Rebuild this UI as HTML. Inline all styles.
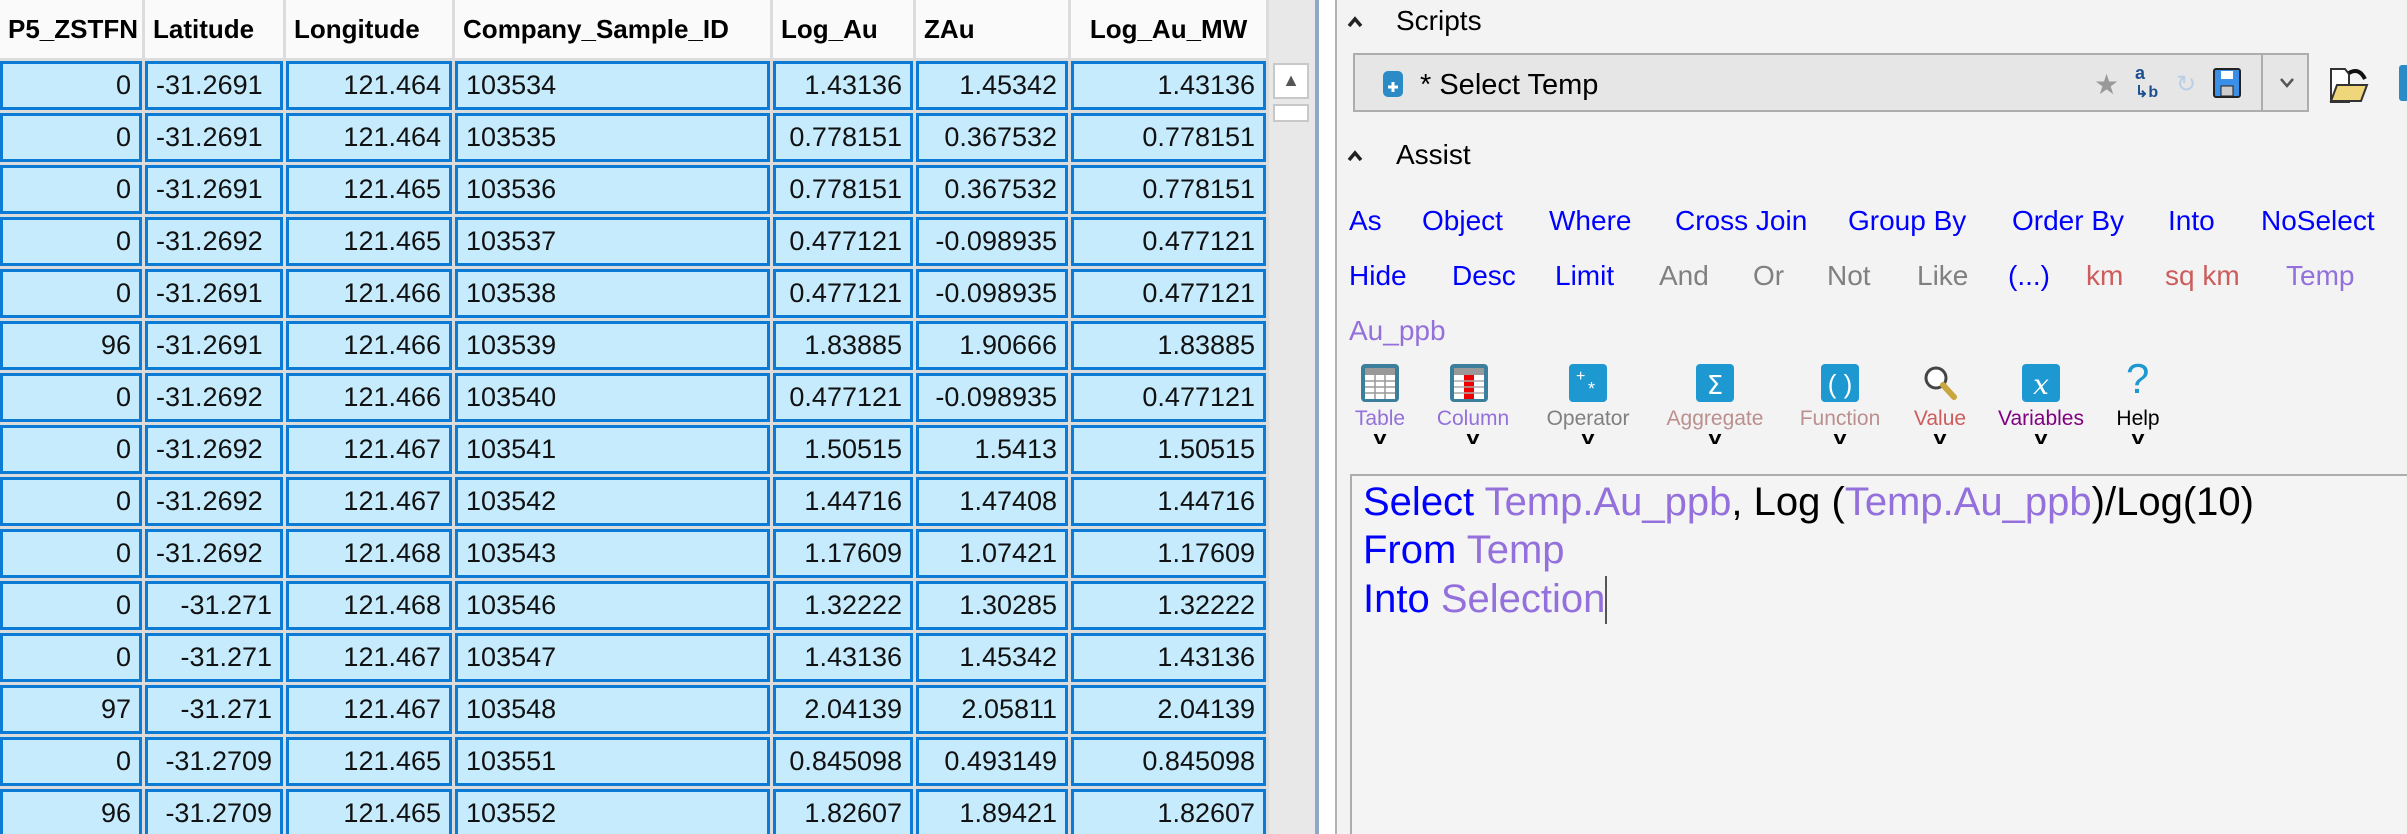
<!DOCTYPE html>
<html><head><meta charset="utf-8"><style>
*{margin:0;padding:0;box-sizing:border-box}
html,body{width:2407px;height:834px;overflow:hidden}
body{background:#f3f3f3;font-family:"Liberation Sans",sans-serif;position:relative}
#left{position:absolute;left:0;top:0;width:1315px;height:834px;background:#e8e8e8;overflow:hidden}
table{position:absolute;left:-3px;top:-3px;border-collapse:separate;border-spacing:3px;table-layout:fixed;background:#dcdcdc}
th{height:58px;background:#fafafa;font-weight:bold;font-size:26px;text-align:left;padding:0 8px;white-space:nowrap;overflow:hidden;color:#000}
td{height:49px;background:#c5ebfd;border:3px solid #0c7bd6;font-size:27px;text-align:right;padding:0 8px;white-space:nowrap;color:#111}
td.l{text-align:left}
.sb{position:absolute;left:1269px;top:58px;width:46px;height:776px;background:#e8e8e8}
.abs{position:absolute}
.kw{position:absolute;font-size:28px;white-space:nowrap}
.lbl{position:absolute;font-size:21px;white-space:nowrap;transform:translateX(-50%)}
.chev{position:absolute;font-size:18px;transform:translateX(-50%) scaleX(1.3);font-weight:bold}
.ed{position:absolute;font-size:40px;white-space:nowrap;left:1363px}
.b{color:#0000ff}.p{color:#9370db}.g{color:#808080}.r{color:#cd5c5c}
</style></head><body>
<div id="left">
<table>
<colgroup><col style="width:142px"><col style="width:138px"><col style="width:166px"><col style="width:315px"><col style="width:140px"><col style="width:152px"><col style="width:195px"></colgroup>
<tr><th style="text-align:right;padding-right:4px">P5_ZSTFN</th><th>Latitude</th><th>Longitude</th><th>Company_Sample_ID</th><th>Log_Au</th><th>ZAu</th><th style="text-align:center">Log_Au_MW</th></tr>
<tr><td>0</td><td class="l">-31.2691</td><td>121.464</td><td class="l">103534</td><td>1.43136</td><td>1.45342</td><td>1.43136</td></tr>
<tr><td>0</td><td class="l">-31.2691</td><td>121.464</td><td class="l">103535</td><td>0.778151</td><td>0.367532</td><td>0.778151</td></tr>
<tr><td>0</td><td class="l">-31.2691</td><td>121.465</td><td class="l">103536</td><td>0.778151</td><td>0.367532</td><td>0.778151</td></tr>
<tr><td>0</td><td class="l">-31.2692</td><td>121.465</td><td class="l">103537</td><td>0.477121</td><td>-0.098935</td><td>0.477121</td></tr>
<tr><td>0</td><td class="l">-31.2691</td><td>121.466</td><td class="l">103538</td><td>0.477121</td><td>-0.098935</td><td>0.477121</td></tr>
<tr><td>96</td><td class="l">-31.2691</td><td>121.466</td><td class="l">103539</td><td>1.83885</td><td>1.90666</td><td>1.83885</td></tr>
<tr><td>0</td><td class="l">-31.2692</td><td>121.466</td><td class="l">103540</td><td>0.477121</td><td>-0.098935</td><td>0.477121</td></tr>
<tr><td>0</td><td class="l">-31.2692</td><td>121.467</td><td class="l">103541</td><td>1.50515</td><td>1.5413</td><td>1.50515</td></tr>
<tr><td>0</td><td class="l">-31.2692</td><td>121.467</td><td class="l">103542</td><td>1.44716</td><td>1.47408</td><td>1.44716</td></tr>
<tr><td>0</td><td class="l">-31.2692</td><td>121.468</td><td class="l">103543</td><td>1.17609</td><td>1.07421</td><td>1.17609</td></tr>
<tr><td>0</td><td>-31.271</td><td>121.468</td><td class="l">103546</td><td>1.32222</td><td>1.30285</td><td>1.32222</td></tr>
<tr><td>0</td><td>-31.271</td><td>121.467</td><td class="l">103547</td><td>1.43136</td><td>1.45342</td><td>1.43136</td></tr>
<tr><td>97</td><td>-31.271</td><td>121.467</td><td class="l">103548</td><td>2.04139</td><td>2.05811</td><td>2.04139</td></tr>
<tr><td>0</td><td>-31.2709</td><td>121.465</td><td class="l">103551</td><td>0.845098</td><td>0.493149</td><td>0.845098</td></tr>
<tr><td>96</td><td>-31.2709</td><td>121.465</td><td class="l">103552</td><td>1.82607</td><td>1.89421</td><td>1.82607</td></tr>
</table>
<div class="sb">
<div class="abs" style="left:4px;top:5px;width:36px;height:36px;background:#fff;border:2px solid #c8c8c8;font-size:18px;color:#555;text-align:center;line-height:30px">▲</div>
<div class="abs" style="left:4px;top:46px;width:36px;height:18px;background:#fff;border:2px solid #c8c8c8"></div>
</div>
</div>
<div class="abs" style="left:1315px;top:0;width:4px;height:834px;background:#8fa8c8"></div>
<div class="abs" style="left:1319px;top:0;width:16px;height:834px;background:#fff"></div>
<div class="abs" style="left:1335px;top:0;width:2px;height:834px;background:#b4b4b4"></div>

<svg class="abs" style="left:1347px;top:16px" width="16" height="12"><path d="M2 10L8 3l6 7" stroke="#222" stroke-width="3.5" fill="none"/></svg>
<div class="abs" style="left:1396px;top:5px;font-size:28px">Scripts</div>
<div class="abs" style="left:1353px;top:53px;width:956px;height:59px;border:2px solid #adadad;background:#e6e6e6"></div>
<div class="abs" style="left:2261px;top:55px;width:2px;height:55px;background:#adadad"></div>
<svg class="abs" style="left:2279px;top:77px" width="16" height="12"><path d="M2 2l6 7 6-7" stroke="#555" stroke-width="2.5" fill="none"/></svg>
<svg class="abs" style="left:1382px;top:70px" width="22" height="28"><rect x="1" y="1" width="20" height="26" rx="5" fill="#2a8bc7"/><path d="M11 12v10M6 17h10" stroke="#fff" stroke-width="3"/></svg>
<div class="abs" style="left:1420px;top:69px;font-size:29px">* Select Temp</div>
<div class="abs" style="left:2094px;top:68px;font-size:28px;color:#999">★</div>
<div class="abs" style="left:2135px;top:64px;font-size:18px;color:#1c4f8f;font-weight:bold;line-height:18px">a<br><span style="font-size:16px">↳b</span></div>
<div class="abs" style="left:2176px;top:70px;font-size:24px;color:#b8cfe6">↻</div>
<svg class="abs" style="left:2213px;top:68px" width="28" height="30"><rect x="1" y="1" width="26" height="28" rx="2" fill="#3a8fe8" stroke="#222" stroke-width="2"/><rect x="8" y="3" width="12" height="8" fill="#fff"/><rect x="8" y="18" width="12" height="10" fill="#ccc" stroke="#222"/></svg>
<svg class="abs" style="left:2329px;top:65px" width="40" height="38"><path d="M2 4h14l4 5h0v28H2z" fill="#fff" stroke="#333" stroke-width="2"/><path d="M2 36l6-16h30l-6 16z" fill="#f0d67a" stroke="#333" stroke-width="2"/><path d="M20 8q10-6 16 6" stroke="#111" stroke-width="4" fill="none"/></svg>
<div class="abs" style="left:2399px;top:65px;width:10px;height:36px;background:#2a8bc7;border-radius:3px"></div>

<svg class="abs" style="left:1347px;top:150px" width="16" height="12"><path d="M2 10L8 3l6 7" stroke="#222" stroke-width="3.5" fill="none"/></svg>
<div class="abs" style="left:1396px;top:139px;font-size:28px">Assist</div>

<div class="kw b" style="left:1349px;top:205px">As</div>
<div class="kw b" style="left:1422px;top:205px">Object</div>
<div class="kw b" style="left:1549px;top:205px">Where</div>
<div class="kw b" style="left:1675px;top:205px">Cross Join</div>
<div class="kw b" style="left:1848px;top:205px">Group By</div>
<div class="kw b" style="left:2012px;top:205px">Order By</div>
<div class="kw b" style="left:2168px;top:205px">Into</div>
<div class="kw b" style="left:2261px;top:205px">NoSelect</div>
<div class="kw b" style="left:1349px;top:260px">Hide</div>
<div class="kw b" style="left:1452px;top:260px">Desc</div>
<div class="kw b" style="left:1555px;top:260px">Limit</div>
<div class="kw g" style="left:1659px;top:260px">And</div>
<div class="kw g" style="left:1753px;top:260px">Or</div>
<div class="kw g" style="left:1827px;top:260px">Not</div>
<div class="kw g" style="left:1917px;top:260px">Like</div>
<div class="kw b" style="left:2008px;top:260px">(...)</div>
<div class="kw r" style="left:2086px;top:260px">km</div>
<div class="kw r" style="left:2165px;top:260px">sq km</div>
<div class="kw p" style="left:2286px;top:260px">Temp</div>
<div class="kw p" style="left:1349px;top:315px">Au_ppb</div>

<svg class="abs" style="left:1360px;top:363px" width="40" height="40"><rect x="1" y="1" width="38" height="38" rx="4" fill="#3b7f9c"/><rect x="5" y="5" width="30" height="7" fill="#999"/><path d="M5 12h30v24H5z" fill="#fff"/><path d="M5 18h30M5 24h30M5 30h30M15 12v24M25 12v24" stroke="#999" stroke-width="1.5"/></svg>
<svg class="abs" style="left:1449px;top:363px" width="40" height="40"><rect x="1" y="1" width="38" height="38" rx="4" fill="#3b7f9c"/><rect x="5" y="5" width="30" height="7" fill="#999"/><path d="M5 12h30v24H5z" fill="#fff"/><rect x="15" y="12" width="10" height="24" fill="#e00"/><path d="M5 18h30M5 24h30M5 30h30" stroke="#aaa" stroke-width="1.5"/></svg>
<svg class="abs" style="left:1568px;top:363px" width="40" height="40"><rect x="1" y="1" width="38" height="38" rx="4" fill="#1e98d0"/><text x="8" y="18" fill="#fff" font-size="16" font-family="Liberation Sans">+</text><text x="20" y="32" fill="#fff" font-size="18" font-family="Liberation Sans">*</text></svg>
<svg class="abs" style="left:1695px;top:363px" width="40" height="40"><rect x="1" y="1" width="38" height="38" rx="4" fill="#1e98d0"/><text x="20" y="31" fill="#fff" font-size="26" text-anchor="middle" font-family="DejaVu Sans">Σ</text></svg>
<svg class="abs" style="left:1820px;top:363px" width="40" height="40"><rect x="1" y="1" width="38" height="38" rx="4" fill="#1e98d0"/><text x="20" y="30" fill="#fff" font-size="26" text-anchor="middle" font-family="Liberation Sans">( )</text></svg>
<svg class="abs" style="left:1920px;top:363px" width="40" height="40"><circle cx="16" cy="15" r="10" fill="#fff" stroke="#444" stroke-width="3"/><path d="M23 22l11 12" stroke="#c9a640" stroke-width="6" stroke-linecap="round"/></svg>
<svg class="abs" style="left:2021px;top:363px" width="40" height="40"><rect x="1" y="1" width="38" height="38" rx="4" fill="#1e98d0"/><text x="20" y="31" fill="#fff" font-size="28" text-anchor="middle" font-family="DejaVu Serif" font-style="italic">x</text></svg>
<div class="abs" style="left:2126px;top:355px;font-size:42px;color:#1e98d0">?</div>

<div class="lbl" style="left:1380px;top:407px;color:#9370db">Table</div>
<div class="lbl" style="left:1473px;top:407px;color:#9370db">Column</div>
<div class="lbl" style="left:1588px;top:407px;color:#808080">Operator</div>
<div class="lbl" style="left:1715px;top:407px;color:#bc8f8f">Aggregate</div>
<div class="lbl" style="left:1840px;top:407px;color:#bc8f8f">Function</div>
<div class="lbl" style="left:1940px;top:407px;color:#cd5c5c">Value</div>
<div class="lbl" style="left:2041px;top:407px;color:#800080">Variables</div>
<div class="lbl" style="left:2138px;top:407px;color:#000">Help</div>
<div class="chev" style="left:1380px;top:428px">v</div>
<div class="chev" style="left:1473px;top:428px">v</div>
<div class="chev" style="left:1588px;top:428px">v</div>
<div class="chev" style="left:1715px;top:428px">v</div>
<div class="chev" style="left:1840px;top:428px">v</div>
<div class="chev" style="left:1940px;top:428px">v</div>
<div class="chev" style="left:2041px;top:428px">v</div>
<div class="chev" style="left:2138px;top:428px">v</div>

<div class="abs" style="left:1350px;top:474px;width:1070px;height:400px;border:2px solid #adadad;background:#f4f4f4"></div>
<div class="ed" style="top:480px"><span class="b">Select</span> <span class="p">Temp.Au_ppb</span>, Log (<span class="p">Temp.Au_ppb</span>)/Log(10)</div>
<div class="ed" style="top:528px"><span class="b">From</span> <span class="p">Temp</span></div>
<div class="ed" style="top:576px"><span class="b">Into</span> <span class="p">Selection</span><span style="display:inline-block;width:2px;height:48px;background:#555;vertical-align:-12px"></span></div>
</body></html>
